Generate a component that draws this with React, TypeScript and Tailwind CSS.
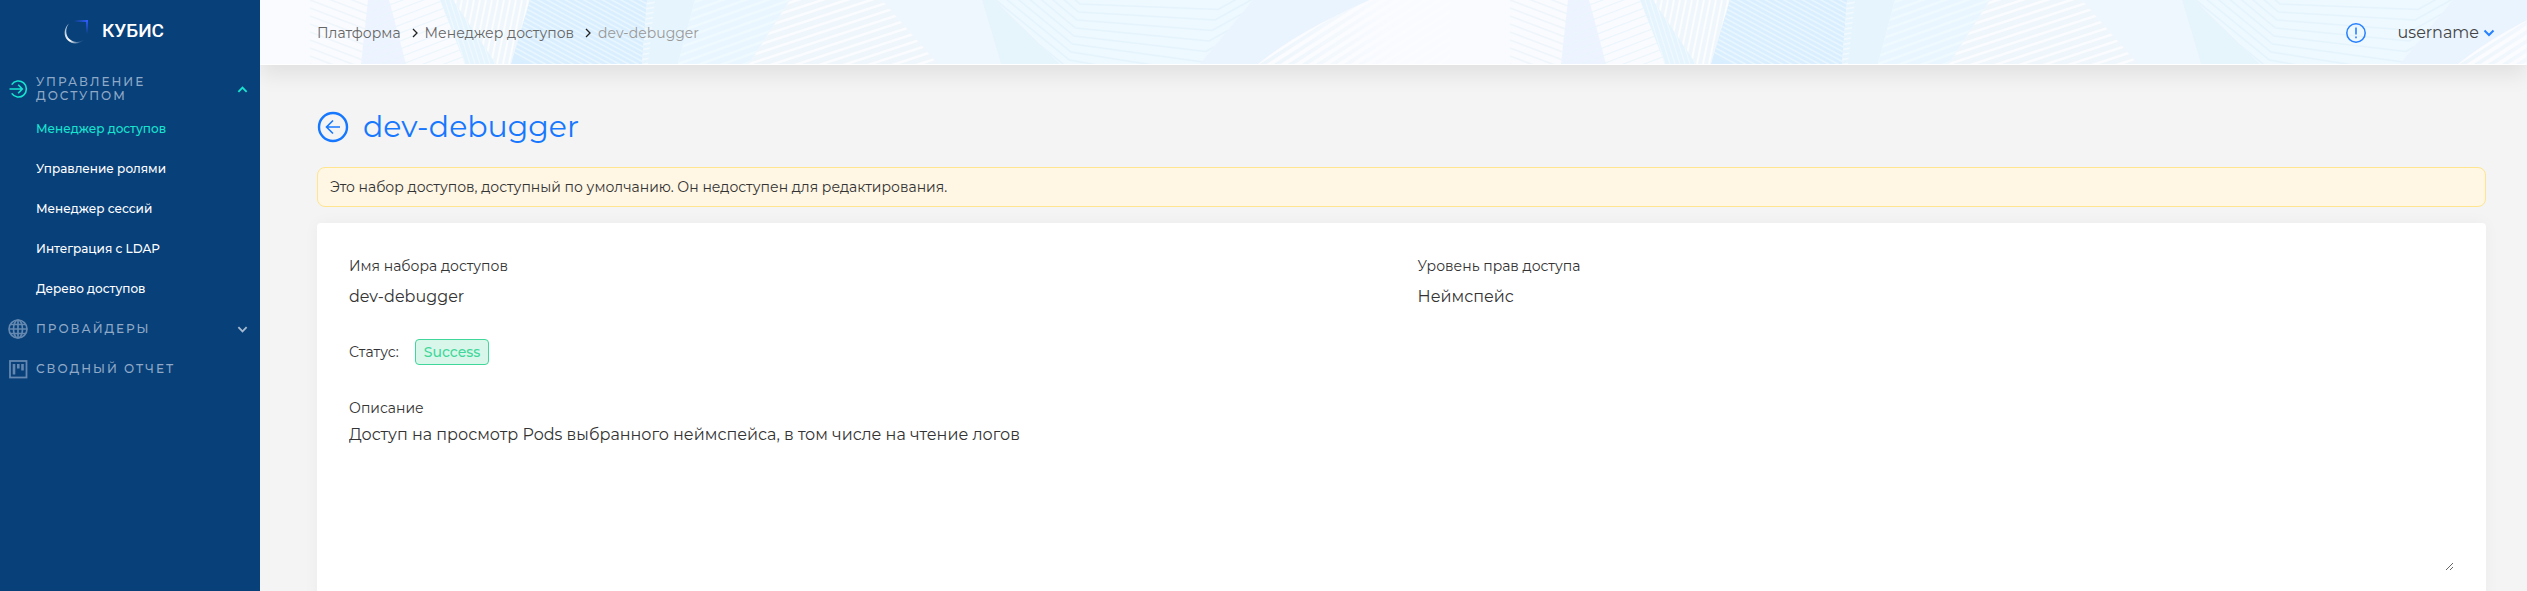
import React from 'react';

const range = (from: number, to: number, step: number) => {
  const items: number[] = [];
  for (let i = from; i <= to; i += step) items.push(i);
  return items;
};

const sections = [
  { title: 'Менеджер доступов', active: true },
  { title: 'Управление ролями' },
  { title: 'Менеджер сессий' },
  { title: 'Интеграция с LDAP' },
  { title: 'Дерево доступов' },
];

const Logo = () => (
  <svg className="size-7" viewBox="0 0 28 28" fill="none">
    <defs>
      <linearGradient id="logoArc" x1="6" y1="10" x2="21" y2="22" gradientUnits="userSpaceOnUse">
        <stop offset="0" stopColor="#fff" stopOpacity="0.7" />
        <stop offset="0.5" stopColor="#fff" />
        <stop offset="1" stopColor="#fff" stopOpacity="0.1" />
      </linearGradient>
      <linearGradient id="logoTop" x1="12" y1="4" x2="26" y2="4" gradientUnits="userSpaceOnUse">
        <stop offset="0" stopColor="#2f5bff" stopOpacity="0" />
        <stop offset="1" stopColor="#2f5bff" />
      </linearGradient>
      <linearGradient id="logoSide" x1="25" y1="3" x2="25" y2="17" gradientUnits="userSpaceOnUse">
        <stop offset="0" stopColor="#2f5bff" />
        <stop offset="1" stopColor="#2f5bff" stopOpacity="0" />
      </linearGradient>
    </defs>
    <path d="M7 6.4C1.6 11 1.2 19 6 23.6C10.6 28 18 27.4 22 22.6C18 25.6 11.600 26 7.400 22C3.200 18 3.400 11 7 6.400Z" fill="url(#logoArc)" />
    <rect x="11" y="3" width="15" height="2" fill="url(#logoTop)" />
    <rect x="24" y="3" width="2" height="14" fill="url(#logoSide)" />
  </svg>
);

const EnterIcon = () => (
  <svg className="size-5 shrink-0" viewBox="0 0 20 20" fill="none" stroke="currentColor" strokeWidth="1.6">
    <path d="M3.700 5.600A8 8 0 1 1 3.700 14.400" />
    <path d="M1.500 10H14M10.200 5.800L14.300 10L10.200 14.200" />
  </svg>
);

const GlobeIcon = () => (
  <svg className="size-5 shrink-0" viewBox="0 0 20 20" fill="none" stroke="currentColor" strokeWidth="1.7">
    <circle cx="10" cy="10" r="9" />
    <ellipse cx="10" cy="10" rx="4.500" ry="9" />
    <path d="M10 1V19M1 10H19M2.500 5.500H17.500M2.500 14.500H17.500" />
  </svg>
);

const ReportIcon = () => (
  <svg className="size-5 shrink-0" viewBox="0 0 20 20" fill="none" stroke="currentColor">
    <rect x="2" y="2" width="16.500" height="16.500" strokeWidth="1.800" />
    <path d="M6 5V15.500M10.300 5V9.500M14.500 5V11.500" strokeWidth="2.600" />
  </svg>
);

const Chevron = ({ className }: any) => (
  <svg className={className} viewBox="0 0 12 12" fill="none" stroke="currentColor" strokeWidth="2">
    <path d="M1.500 3.500L6 8L10.500 3.500" />
  </svg>
);

const Separator = () => (
  <svg className="h-3 w-2" viewBox="0 0 8 12" fill="none" stroke="#222" strokeWidth="1.3">
    <path d="M2 2L6 6L2 10" />
  </svg>
);

// Repeating geometric background of the top bar, one tile is 1200px wide
const HeaderPattern = () => (
  <svg className="absolute inset-x-0 top-0 h-16 w-full" aria-hidden="true">
    <defs>
      <clipPath id="cA"><path d="M50 0H108L101 64H50Z" /></clipPath>
      <clipPath id="cV"><path d="M108 0H180L205 64H101Z" /></clipPath>
      <clipPath id="cC"><path d="M180 0H200L251 64H205Z" /></clipPath>
      <clipPath id="cD"><path d="M193 0H270L251 64H236Z" /></clipPath>
      <clipPath id="cE"><path d="M270 0H387L382 64H251Z" /></clipPath>
      <clipPath id="cE2"><path d="M387 0H395L388 64H382Z" /></clipPath>
      <clipPath id="cG"><path d="M435 0H530L489 64H418Z" /></clipPath>
      <clipPath id="cH"><path d="M530 0H622L678 64H489Z" /></clipPath>
      <clipPath id="cK"><path d="M735 0H993L940 64H800Z" /></clipPath>
      <clipPath id="cM"><path d="M998 64Q1040 30 1110 0H1190V64Z" /></clipPath>
      <linearGradient id="gM">
        <stop offset="0" stopColor="#ecf6fc" />
        <stop offset="0.700" stopColor="#fafbff" />
      </linearGradient>
      <pattern id="tile" width="1200" height="64" patternUnits="userSpaceOnUse">
        <rect width="1200" height="64" fill="#fafbff" />
        <path d="M108 0H129L146 64H101Z" fill="#eef4ff" />
        <g clipPath="url(#cA)" stroke="#eef6fc" strokeWidth="1.500">
          {range(-24, 64, 8).map((y) => (
            <path key={y} d={`M50 ${y}L108 ${y + 22}`} />
          ))}
        </g>
        <g clipPath="url(#cV)" stroke="#e8f5fc" strokeWidth="1.200" opacity="0.800">
          {range(0, 110, 8).map((y) => (
            <path key={y} d={`M101 ${y}L205 ${y - 40}`} />
          ))}
        </g>
        <path d="M180 0H200L251 64H205Z" fill="#e6f5fd" />
        <g clipPath="url(#cC)" stroke="#f2faff" strokeWidth="1">
          {range(150, 240, 5).map((x) => (
            <path key={x} d={`M${x} 0L${x + 20} 64`} />
          ))}
        </g>
        <path d="M193 0H270L251 64H236Z" fill="#f0f7fc" />
        <g clipPath="url(#cD)" stroke="#fbfdff" strokeWidth="2">
          {range(196, 276, 6).map((x) => (
            <path key={x} d={`M${x} 0L${x - 13} 64`} />
          ))}
        </g>
        <path d="M270 0H387L382 64H251Z" fill="#d9eeff" />
        <g clipPath="url(#cE)" stroke="#e8f6fe" strokeWidth="1.700">
          {range(-90, 64, 5).map((y) => (
            <path key={y} d={`M250 ${y - 10}L387 ${y + 64}`} />
          ))}
        </g>
        <path d="M387 0H435L418 64H382Z" fill="#e6f5fd" />
        <g clipPath="url(#cE2)" stroke="#f2faff" strokeWidth="1.500">
          {range(0, 70, 5).map((y) => (
            <path key={y} d={`M380 ${y}L396 ${y - 3}`} />
          ))}
        </g>
        <path d="M435 0H530L489 64H418Z" fill="#eaf6ff" />
        <g clipPath="url(#cG)" stroke="#effaff" strokeWidth="2.500">
          {range(0, 110, 8).map((y) => (
            <path key={y} d={`M418 ${y}L530 ${y - 40}`} />
          ))}
        </g>
        <path d="M530 0H622L678 64H489Z" fill="#eff7fc" />
        <g clipPath="url(#cH)" stroke="#fbfcff" strokeWidth="2.500">
          {range(0, 130, 8).map((y) => (
            <path key={y} d={`M489 ${y}L678 ${y - 62}`} />
          ))}
        </g>
        <path d="M622 0H722L741 64H678Z" fill="#eff7fe" />
        <path d="M722 0H735L800 64H741Z" fill="#e6f4fc" />
        <path d="M735 0H993L940 64H800Z" fill="#eef8ff" />
        <g clipPath="url(#cK)" stroke="#e5f4fc" strokeWidth="1.500" fill="none">
          {range(0, 9, 1).map((i) => (
            <path
              key={i}
              d={`M${730 - i * 2} ${-72 + i * 8}L${820 - i * 1.5} ${4 + i * 8}L${958 - i * 3} ${
                9.5 + i * 10.5
              }L${1040 - i * 3} ${-36 + i * 10.5}`}
            />
          ))}
        </g>
        <path d="M993 0H1200V64H940Z" fill="#e9f4fe" />
        <path d="M998 64Q1040 30 1110 0H1200V64Z" fill="url(#gM)" />
        <g clipPath="url(#cM)" stroke="#fbfcff" strokeWidth="4">
          {range(990, 1260, 14).map((x) => (
            <path key={x} d={`M${x} 68L${x + 112} -4`} />
          ))}
        </g>
      </pattern>
    </defs>
    <rect width="100%" height="64" fill="url(#tile)" />
  </svg>
);

const Sidebar = () => (
  <aside className="relative z-10 w-65 shrink-0 bg-[#08407a]">
    <a href="#" className="flex h-[62px] items-center gap-3 pl-[62px]">
      <Logo />
      <span className="font-['Roboto',sans-serif] text-[19px] font-medium text-white">КУБИС</span>
    </a>
    <nav className="pt-[7px]">
      <button
        type="button"
        className="flex h-10 w-full items-center gap-2 pr-3 pl-2 text-left text-xs leading-[14px] font-medium tracking-[2px] text-[#8fa9c6] uppercase"
      >
        <span className="text-[#17e5d0]">
          <EnterIcon />
        </span>
        <span className="w-40">Управление доступом</span>
        <Chevron className="ml-auto size-[11px] rotate-180 text-[#17e5d0]" />
      </button>
      <ul>
        {sections.map((item) => (
          <li key={item.title}>
            <a
              href="#"
              className={`flex h-10 items-center pl-9 text-xs font-medium ${
                item.active ? 'text-[#17e5d0]' : 'text-white'
              }`}
            >
              {item.title}
            </a>
          </li>
        ))}
      </ul>
      <button
        type="button"
        className="flex h-10 w-full items-center gap-2 pr-3 pl-2 text-xs font-medium tracking-[2px] text-[#8fa9c6] uppercase"
      >
        <span className="text-[#6488b0]">
          <GlobeIcon />
        </span>
        Провайдеры
        <Chevron className="ml-auto size-[11px] text-[#a5bad0]" />
      </button>
      <a
        href="#"
        className="flex h-10 items-center gap-2 pl-2 text-xs font-medium tracking-[2px] text-[#8fa9c6] uppercase"
      >
        <span className="text-[#6488b0]">
          <ReportIcon />
        </span>
        Сводный отчет
      </a>
    </nav>
  </aside>
);

const Header = () => (
  <header className="relative flex h-[65px] items-center justify-between bg-white pr-8 pl-[57px] shadow-[0_10px_20px_rgba(0,0,0,0.08)]">
    <HeaderPattern />
    <nav className="relative flex items-center gap-1.5 text-sm text-[#666]">
      <a href="#" className="mr-1">
        Платформа
      </a>
      <Separator />
      <a href="#" className="mr-1">
        Менеджер доступов
      </a>
      <Separator />
      <span className="text-[#999]">dev-debugger</span>
    </nav>
    <div className="relative flex items-center gap-8">
      <button type="button" aria-label="Уведомления" className="text-[#2680ff]">
        <svg className="size-5" viewBox="0 0 20 20" fill="none" stroke="currentColor">
          <circle cx="10" cy="10" r="9.200" strokeWidth="1.500" />
          <path d="M10 4.500V11.500M10 13.600V15.200" strokeWidth="1.600" />
        </svg>
      </button>
      <button type="button" className="flex items-center gap-1 text-base text-[#444]">
        username
        <Chevron className="size-3 text-[#2680ff]" />
      </button>
    </div>
  </header>
);

const Field = ({ label, value }: any) => (
  <div className="flex flex-col gap-2">
    <span className="text-sm leading-[22px]">{label}</span>
    <span className="text-base leading-6">{value}</span>
  </div>
);

const App = () => {
  return (
    <div className="flex h-screen overflow-hidden bg-[#f4f4f4] font-['Montserrat','Inter',sans-serif] text-[#333]">
      <Sidebar />
      <div className="min-w-0 flex-1">
        <Header />
        <main className="pt-[38px] pr-[41px] pl-[57px]">
          <div className="flex h-12 items-center gap-3.5 text-[#1677ff]">
            <a href="#" aria-label="Назад">
              <svg className="size-8" viewBox="0 0 32 32" fill="none" stroke="currentColor">
                <circle cx="16" cy="16" r="14" strokeWidth="2.400" />
                <path d="M23 16H9.500M16 9.500L9.500 16L16 22.500" strokeWidth="1.600" />
              </svg>
            </a>
            <h1 className="text-[30px] leading-10 font-normal">dev-debugger</h1>
          </div>
          <div className="mt-4 flex h-10 items-center rounded-lg border border-[#ffe58f] bg-[#fff6e3] px-3 text-sm">
            Это набор доступов, доступный по умолчанию. Он недоступен для редактирования.
          </div>
          <section className="mt-4 rounded-sm bg-white p-8 shadow-[0_0_16px_rgba(0,0,0,0.04)]">
            <div className="grid grid-cols-2 gap-8">
              <Field label="Имя набора доступов" value="dev-debugger" />
              <Field label="Уровень прав доступа" value="Неймспейс" />
            </div>
            <div className="mt-[30px] flex items-center gap-4 text-sm">
              Статус:
              <span className="flex h-[26px] items-center rounded border border-[#41d69a] bg-[#d9f6ea] px-2 font-medium text-[#41d69a]">
                Success
              </span>
            </div>
            <label htmlFor="description" className="mt-8 block text-sm leading-[22px]">
              Описание
            </label>
            <textarea
              id="description"
              readOnly
              className="block h-[152px] w-full resize py-1 text-base leading-6 outline-none"
              defaultValue="Доступ на просмотр Pods выбранного неймспейса, в том числе на чтение логов"
            />
          </section>
        </main>
      </div>
    </div>
  );
};

export default App;
